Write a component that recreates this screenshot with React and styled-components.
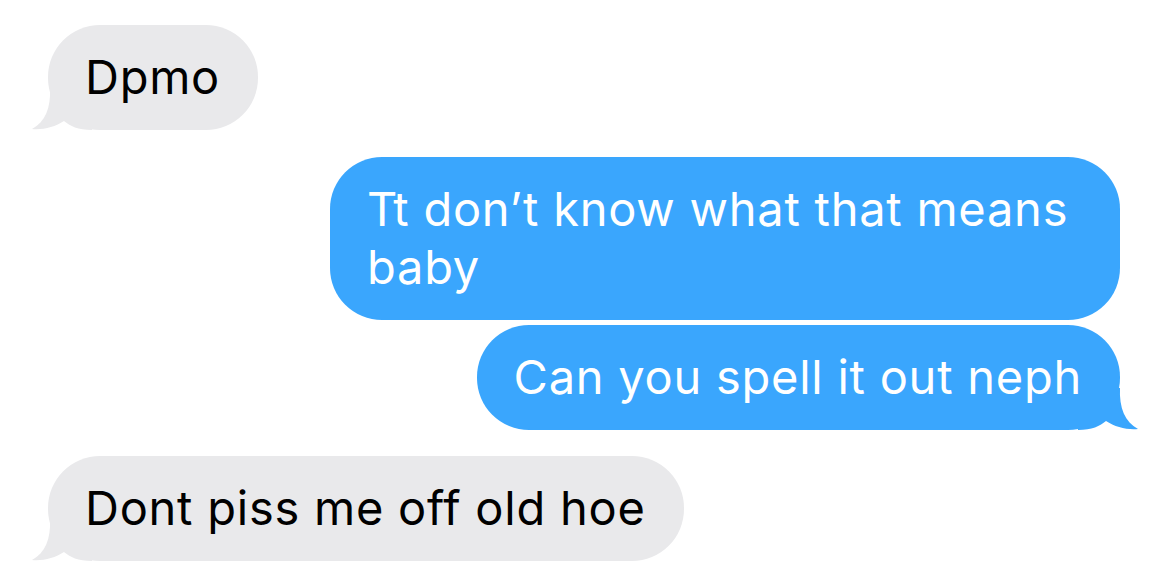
import React from "react";
import styled, { createGlobalStyle } from "styled-components";

const Global = createGlobalStyle`
  html, body { margin: 0; padding: 0; background: #ffffff; }
  body { font-family: Inter, "Noto Sans", sans-serif; }
`;

const Thread = styled.div`
  width: 1170px;
  height: 582px;
  box-sizing: border-box;
  padding: 25px 50px 0 48px;
  display: flex;
  flex-direction: column;
  overflow: hidden;
`;

const Row = styled.div`
  display: flex;
  justify-content: ${(p) => (p.$out ? "flex-end" : "flex-start")};
  margin-top: ${(p) => p.$gap}px;
`;

const Bubble = styled.div`
  position: relative;
  box-sizing: border-box;
  max-width: 790px;
  padding: 23px 38px 24px 37px;
  border-radius: 52px;
  background: ${(p) => (p.$out ? "#3aa6fd" : "#e9e9eb")};
  color: ${(p) => (p.$out ? "#ffffff" : "#000000")};
  font-size: 47px;
  line-height: 58px;
  letter-spacing: 0.75px;
`;

const Text = styled.span`
  position: relative;
  z-index: 1;
`;

const TailSvg = styled.svg`
  position: absolute;
  bottom: 0;
  ${(p) => (p.$out ? "right: -18px; transform: scaleX(-1);" : "left: -16px;")}
  width: 60px;
  height: 42px;
  z-index: 0;
`;

function Tail({ out, color }) {
  return (
    <TailSvg $out={out} viewBox="0 0 60 42">
      <path
        d="M 30 0 L 18 0 C 19 20, 13 34, 0 41 C 11 42, 23 39, 32 33 C 38 38, 46 42, 60 42 L 60 0 Z"
        fill={color}
      />
    </TailSvg>
  );
}

function Message({ out, tail, children }) {
  return (
    <Bubble $out={out}>
      {tail && <Tail out={out} color={out ? "#3aa6fd" : "#e9e9eb"} />}
      <Text>{children}</Text>
    </Bubble>
  );
}

export default function App() {
  return (
    <>
      <Global />
      <Thread>
        <Row $gap={0}>
          <Message tail>Dpmo</Message>
        </Row>
        <Row $out $gap={27}>
          <Message out>{"Tt don\u2019t know what that means baby"}</Message>
        </Row>
        <Row $out $gap={5}>
          <Message out tail>Can you spell it out neph</Message>
        </Row>
        <Row $gap={26}>
          <Message tail>Dont piss me off old hoe</Message>
        </Row>
      </Thread>
    </>
  );
}
